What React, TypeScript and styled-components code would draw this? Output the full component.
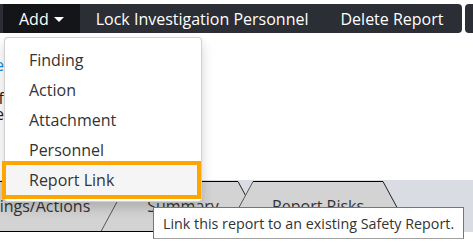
import styled, { createGlobalStyle } from "styled-components";

const GlobalStyle = createGlobalStyle`
    body{margin: 0; font-family: "Open Sans", "Liberation Sans", sans-serif; background: #fff;}
`;

const Screen = styled.div`
    position: relative; width: 473px; height: 245px; overflow: hidden; background: #fff;
    display: flex; flex-direction: column;
`;

const ToolbarRow = styled.div`
    display: flex; gap: 3px; padding-top: 4px; height: 29px;
`;

const ButtonGroup = styled.div<{ $side: "left" | "right" }>`
    display: flex; height: 29px; background: #2b2e35;
    border-radius: ${p => p.$side === "left" ? "0 4px 4px 0" : "4px 0 0 4px"};
    padding: ${p => p.$side === "left" ? "0 3px 0 3px" : "0"};
    flex: ${p => p.$side === "right" ? "1" : "none"};
`;

const ToolButton = styled.button<{ $active?: boolean }>`
    display: flex; align-items: center; border: 0; margin: 0;
    padding: 0 16px; height: 29px;
    background: ${p => p.$active ? "#141518" : "transparent"};
    color: #fff; font: 16px "Open Sans", sans-serif; white-space: nowrap; cursor: pointer;
`;

const Caret = styled.span`
    display: inline-block; width: 0; height: 0; margin-left: 5px; margin-top: 1px;
    border-top: 5px solid #fff; border-left: 5px solid transparent; border-right: 5px solid transparent;
`;

const Behind = styled.div`
    height: 147px; display: flex; flex-direction: column;
`;

const Snippets = styled.div`
    width: 4px; overflow: hidden; direction: rtl; padding-top: 24px;
    font-size: 16px; line-height: 16px; white-space: nowrap;
`;

const Snippet = styled.div<{ $link?: boolean; $gap: number }>`
    color: ${p => p.$link ? "#1a8ad4" : "#222"}; margin-top: ${p => p.$gap}px;
`;

const TabStrip = styled.div`
    display: flex; height: 52px; background: #d9dce3; padding-top: 1px; box-sizing: border-box;
`;

const Tab = styled.div<{ $width: number; $shift: number }>`
    position: relative; flex: none; width: ${p => p.$width}px; height: 51px; margin-left: ${p => p.$shift}px;
    display: flex; align-items: center; justify-content: center;
    font-size: 16px; color: #333; white-space: nowrap;
    & svg{position: absolute; inset: 0;}
    & span{position: relative; margin-top: -1px;}
`;

const Menu = styled.ul`
    position: absolute; left: 4px; top: 37px; width: 196px; margin: 0; padding: 7px 0 6px;
    list-style: none; background: #fff; border: 1px solid rgba(0,0,0,.18); border-radius: 4px;
    box-shadow: 0 6px 12px rgba(0,0,0,.175);
`;

const MenuItem = styled.li<{ $focused?: boolean }>`
    height: 30px; line-height: 30px; font-size: 16px; color: #333;
    padding-left: ${p => p.$focused ? "23px" : "24px"};
    margin: ${p => p.$focused ? "0 4px 0 1px" : "0"};
    background: ${p => p.$focused ? "#f5f5f5" : "transparent"};
    outline: ${p => p.$focused ? "4px solid #ffa500" : "none"};
`;

const Tooltip = styled.div`
    position: absolute; left: 153px; top: 207px; width: 300px; height: 30px;
    background: #fff; border: 1px solid #767676; border-bottom-color: #a0a0a0;
    font-size: 14.3px; line-height: 31px; color: #333; padding-left: 9px; box-sizing: content-box;
    white-space: nowrap;
`;

const tabs = [
    { label: "Findings/Actions", width: 272, shift: -107 },
    { label: "Summary", width: 164, shift: -64 },
    { label: "Report Risks", width: 184, shift: -39 },
];

function TabShape({ width }: { width: number }) {
    const inset = 27;
    return (
        <svg width={width} height={51} viewBox={`0 0 ${width} 51`}>
            <polygon points={`${inset},0.5 ${width - inset},0.5 ${width},50.5 0,50.5`} fill="#d3d3d3" />
            <line x1={inset} y1={0.5} x2={0} y2={50.5} stroke="#555" strokeWidth={1} />
            <line x1={width - inset} y1={0.5} x2={width} y2={50.5} stroke="#222" strokeWidth={1} />
            <line x1={inset} y1={0.5} x2={width - inset} y2={0.5} stroke="#000" strokeWidth={1} />
            <line x1={0} y1={50.5} x2={width} y2={50.5} stroke="#000" strokeWidth={1} />
        </svg>
    );
}

export default function App() {
    return (
        <Screen>
            <GlobalStyle />
            <ToolbarRow>
                <ButtonGroup $side="left">
                    <ToolButton $active>Add<Caret /></ToolButton>
                    <ToolButton>Lock Investigation Personnel</ToolButton>
                    <ToolButton>Delete Report</ToolButton>
                </ButtonGroup>
                <ButtonGroup $side="right" />
            </ToolbarRow>
            <Behind>
                <Snippets>
                    <Snippet $link $gap={0}>Reference</Snippet>
                    <Snippet $gap={17}>Type of</Snippet>
                    <Snippet $gap={0}>Date</Snippet>
                </Snippets>
            </Behind>
            <TabStrip>
                {tabs.map(t => (
                    <Tab key={t.label} $width={t.width} $shift={t.shift}>
                        <TabShape width={t.width} />
                        <span>{t.label}</span>
                    </Tab>
                ))}
            </TabStrip>
            <Menu>
                <MenuItem>Finding</MenuItem>
                <MenuItem>Action</MenuItem>
                <MenuItem>Attachment</MenuItem>
                <MenuItem>Personnel</MenuItem>
                <MenuItem $focused>Report Link</MenuItem>
            </Menu>
            <Tooltip>Link this report to an existing Safety Report.</Tooltip>
        </Screen>
    );
}
